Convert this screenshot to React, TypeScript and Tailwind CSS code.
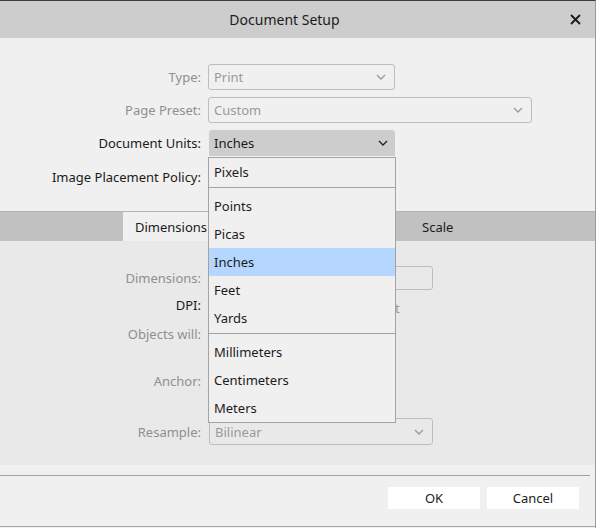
import React from "react";

const Chevron = ({ color = "#9a9a9a" }: { color?: string }) => (
  <svg width="10" height="6" viewBox="0 0 10 6" className="shrink-0">
    <path d="M1 1 L5 5 L9 1" fill="none" stroke={color} strokeWidth="1.3" />
  </svg>
);

const Label = ({ children, dim = false }: { children: React.ReactNode; dim?: boolean }) => (
  <div className={`w-[204px] pr-[3px] pt-[2px] text-right ${dim ? "text-[#8f8f8f]" : "text-[#1b1b1b]"}`}>{children}</div>
);

export default function App() {
  const items: (string | null)[] = [
    "Pixels",
    null,
    "Points",
    "Picas",
    "Inches",
    "Feet",
    "Yards",
    null,
    "Millimeters",
    "Centimeters",
    "Meters",
  ];
  return (
    <div
      className="relative w-[596px] h-[528px] bg-[#f0f0f0] border-t border-[#3a3a3a] border-r border-r-[#9a9a9a] overflow-hidden text-[13px] flex flex-col"
      style={{ fontFamily: '"Noto Sans", "Open Sans", sans-serif' }}
    >
      {/* title bar */}
      <div className="h-[37px] shrink-0 bg-[#cdcdcd] relative flex items-center justify-center">
        <span className="text-[14px] text-[#1b1b1b] ml-[-26px]">Document Setup</span>
        <svg className="absolute right-[14px] top-[13px]" width="11" height="11" viewBox="0 0 11 11">
          <path d="M1 1 L10 10 M10 1 L1 10" stroke="#1a1a1a" strokeWidth="1.8" />
        </svg>
      </div>

      {/* form */}
      <div className="pt-[26px] flex flex-col gap-[7px] h-[173px] shrink-0">
        <div className="flex items-center h-[26px]">
          <Label dim>Type:</Label>
          <div className="ml-[4px] w-[187px] h-[26px] border border-[#bdbdbd] rounded-[3px] flex items-center justify-between pl-[5px] pr-[8px] text-[#9a9a9a]">
            <span className="pt-[2px]">Print</span>
            <Chevron />
          </div>
        </div>
        <div className="flex items-center h-[26px]">
          <Label dim>Page Preset:</Label>
          <div className="ml-[4px] w-[324px] h-[26px] border border-[#bdbdbd] rounded-[3px] flex items-center justify-between pl-[5px] pr-[8px] text-[#9a9a9a]">
            <span className="pt-[2px]">Custom</span>
            <Chevron />
          </div>
        </div>
        <div className="flex items-center h-[26px]">
          <Label>Document Units:</Label>
          <div className="ml-[5px] w-[186px] h-[26px] bg-[#cdcdcd] rounded-t-[3px] flex items-center justify-between pl-[5px] pr-[7px] text-[#1b1b1b]">
            <span className="pt-[2px]">Inches</span>
            <Chevron color="#222" />
          </div>
        </div>
        <div className="flex items-center h-[26px] mt-[1px]">
          <Label>Image Placement Policy:</Label>
        </div>
      </div>

      {/* tab bar */}
      <div className="h-[30px] shrink-0 bg-[#c1c1c1] border-t border-[#b5b5b5] flex">
        <div className="ml-[123px] w-[96px] pt-[2px] bg-[#f0f0f0] flex items-center justify-center text-[#1b1b1b]">Dimensions</div>
        <div className="ml-[203px] pt-[2px] flex items-center text-[#1b1b1b]">Scale</div>
      </div>

      {/* tab content */}
      <div className="h-[224px] shrink-0 bg-[#e9e9e9] flex flex-col pt-[25px]">
        <div className="flex items-center h-[24px]">
          <Label dim>Dimensions:</Label>
          <div className="ml-[4px] w-[225px] h-[24px] border border-[#bdbdbd] rounded-[3px]"></div>
        </div>
        <div className="flex items-center h-[20px] mt-[5px]">
          <Label>DPI:</Label>
          <div className="ml-[191px] mt-[7px] text-[#9a9a9a]">t</div>
        </div>
        <div className="flex items-center h-[20px] mt-[9px]">
          <Label dim>Objects will:</Label>
        </div>
        <div className="flex items-center h-[20px] mt-[27px]">
          <Label dim>Anchor:</Label>
        </div>
        <div className="flex items-center h-[27px] mt-[27px]">
          <Label dim>Resample:</Label>
          <div className="ml-[5px] w-[224px] h-[27px] border border-[#bdbdbd] rounded-[3px] flex items-center justify-between pl-[5px] pr-[8px] text-[#9a9a9a]">
            <span className="pt-[2px]">Bilinear</span>
            <Chevron />
          </div>
        </div>
      </div>

      {/* footer */}
      <div className="flex-1 flex flex-col">
        <div className="mt-[10px] mr-[5px] h-[1px] bg-[#a3a3a3]"></div>
        <div className="flex justify-end gap-[7px] pr-[16px] mt-[11px]">
          <button className="w-[92px] h-[22px] pt-[2px] bg-white text-[#1b1b1b] flex items-center justify-center">OK</button>
          <button className="w-[92px] h-[22px] pt-[2px] bg-white text-[#1b1b1b] flex items-center justify-center">Cancel</button>
        </div>
        <div className="mt-auto mb-[1px] h-[1px] bg-[#a8a8a8]"></div>
      </div>

      {/* dropdown list */}
      <div className="absolute left-[208px] top-[156px] w-[188px] bg-[#f0f0f0] border border-[#a3a3a3] flex flex-col">
        {items.map((it, i) =>
          it === null ? (
            <div key={i} className="h-[6px] flex items-start pt-[1px]">
              <div className="h-[1px] w-full bg-[#a3a3a3]" />
            </div>
          ) : (
            <div
              key={i}
              className={`h-[28px] pt-[2px] flex items-center pl-[5px] text-[#1b1b1b] ${it === "Inches" ? "bg-[#b4d6ff]" : ""}`}
            >
              {it}
            </div>
          )
        )}
      </div>
    </div>
  );
}
